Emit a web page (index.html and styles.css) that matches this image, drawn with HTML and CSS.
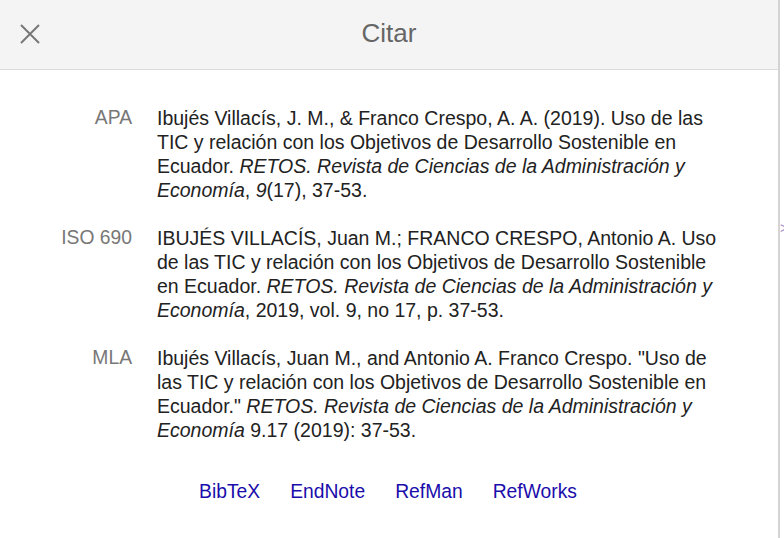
FILE: index.html
```html
<!DOCTYPE html>
<html lang="es">
<head>
<meta charset="utf-8">
<title>Citar</title>
<link rel="stylesheet" href="styles.css">
</head>
<body>
<div class="dialog">
  <header class="header">
    <button class="close" aria-label="Cerrar">
      <svg width="20" height="20" viewBox="0 0 20 20"><path d="M1 1 L19 19 M19 1 L1 19" stroke="#777" stroke-width="2" fill="none"/></svg>
    </button>
    <h1 class="title">Citar</h1>
  </header>
  <main class="content">
    <div class="entries">
      <div class="label">APA</div>
      <div class="cite">Ibujés Villacís, J. M., &amp; Franco Crespo, A. A. (2019). Uso de las TIC y relación con los Objetivos de Desarrollo Sostenible en Ecuador. <i>RETOS. Revista de Ciencias de la Administración y Economía</i>, <i>9</i>(17), 37-53.</div>
      <div class="label">ISO 690</div>
      <div class="cite">IBUJÉS VILLACÍS, Juan M.; FRANCO CRESPO, Antonio A. Uso de las TIC y relación con los Objetivos de Desarrollo Sostenible en Ecuador. <i>RETOS. Revista de Ciencias de la Administración y Economía</i>, 2019, vol. 9, no 17, p. 37-53.</div>
      <div class="label">MLA</div>
      <div class="cite">Ibujés Villacís, Juan M., and Antonio A. Franco Crespo. "Uso de las TIC y relación con los Objetivos de Desarrollo Sostenible en Ecuador." <i>RETOS. Revista de Ciencias de la Administración y Economía</i> 9.17 (2019): 37-53.</div>
    </div>
    <nav class="links">
      <a href="#">BibTeX</a>
      <a href="#">EndNote</a>
      <a href="#">RefMan</a>
      <a href="#">RefWorks</a>
    </nav>
  </main>
</div>
<span class="edge-mark">&gt;</span>
</body>
</html>
```

FILE: styles.css
```css
html, body {
  margin: 0;
  padding: 0;
  background: #fff;
  font-family: "Liberation Sans", Arial, sans-serif;
}

.dialog {
  width: 780px;
  height: 538px;
  border-right: 2px solid #d4d4d4;
  box-sizing: border-box;
  background: #fff;
}

.header {
  height: 70px;
  box-sizing: border-box;
  background: #f4f4f4;
  border-bottom: 1px solid #dcdcdc;
  display: flex;
  align-items: center;
  justify-content: center;
  position: relative;
}

.close {
  position: absolute;
  left: 20px;
  top: 24px;
  width: 20px;
  height: 20px;
  padding: 0;
  border: 0;
  background: none;
  display: flex;
}

.title {
  margin: 0;
  font-size: 26px;
  font-weight: normal;
  color: #666;
  padding-bottom: 3px;
}

.content {
  padding: 36px 0 0 0;
}

.entries {
  display: grid;
  grid-template-columns: 92px 570px;
  column-gap: 25px;
  row-gap: 24px;
  padding-left: 40px;
  font-size: 19.5px;
  line-height: 24px;
}

.label {
  text-align: right;
  color: #777;
  font-size: 19.3px;
}

.cite {
  color: #222;
}

.links {
  display: flex;
  justify-content: center;
  gap: 30px;
  margin-top: 38px;
  font-size: 19.3px;
  line-height: 24px;
  padding-right: 2px;
}

.links a {
  color: #1a0dab;
  text-decoration: none;
}

.edge-mark {
  position: absolute;
  left: 780px;
  top: 220px;
  font-size: 14px;
  color: #a78fc9;
}
```
